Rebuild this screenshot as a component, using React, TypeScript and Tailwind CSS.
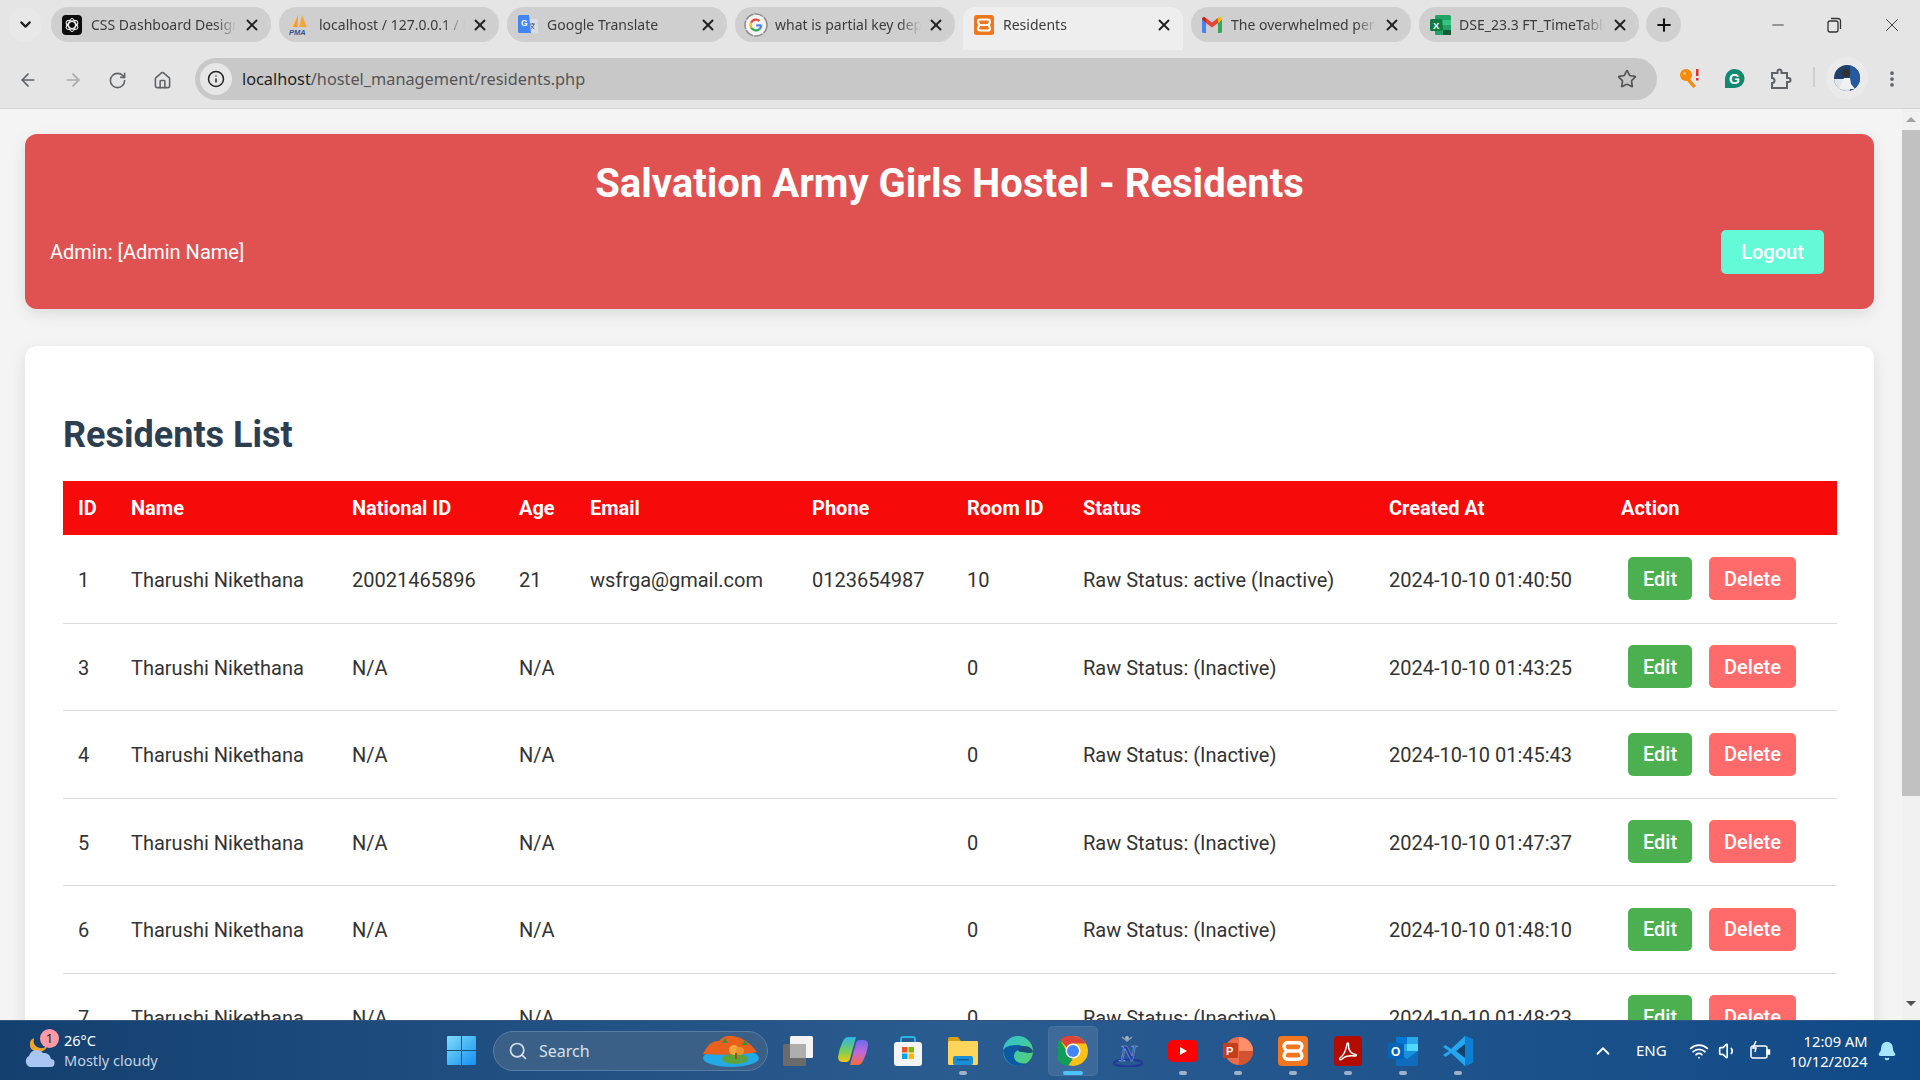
import React from 'react';
import {
  ArrowLeft, ArrowRight, RotateCw, Home, Info, Star, X, Plus, ChevronDown, ChevronUp,
  Minus, MoreVertical, Search, Wifi, Bell, Volume1,
} from 'lucide-react';

const XamppIcon = ({ size = 20 }: { size?: number }) => (
  <svg width={size} height={size} viewBox="0 0 20 20">
    <rect width="20" height="20" rx="2.500" fill="#f0761f" />
    <path
      d="M6.500 4.500h7c1.500 0 2.500 1 2.500 2.300 0 1.500-1.800 3.200-1.800 3.200s1.800 1.700 1.800 3.200c0 1.300-1 2.300-2.500 2.300h-7C5 15.500 4 14.500 4 13.200 4 11.700 5.800 10 5.800 10S4 8.300 4 6.800C4 5.500 5 4.500 6.500 4.500zM5.800 10h8.400"
      fill="none"
      stroke="#fff"
      strokeWidth="2.200"
    />
  </svg>
);

const ChatIcon = () => (
  <svg width="20" height="20" viewBox="0 0 20 20">
    <rect width="20" height="20" rx="4" fill="#0d0d0d" />
    <g fill="none" stroke="#fff" strokeWidth="1">
      <ellipse cx="10" cy="10" rx="3.400" ry="6.500" />
      <ellipse cx="10" cy="10" rx="3.400" ry="6.500" transform="rotate(60 10 10)" />
      <ellipse cx="10" cy="10" rx="3.400" ry="6.500" transform="rotate(120 10 10)" />
    </g>
  </svg>
);

const PmaIcon = () => (
  <svg width="22" height="20" viewBox="0 0 22 20">
    <path d="M9 0 4 12h4.500z" fill="#f29b2c" />
    <path d="M13 0 10 12h8z" fill="#f5a53c" />
    <path d="M6 2 1 12h3z" fill="#f9c788" />
    <text x="0" y="19.500" fontSize="7.500" fontWeight="700" fontStyle="italic" fill="#34508f" fontFamily="Liberation Sans, sans-serif">PMA</text>
  </svg>
);

const TranslateIcon = () => (
  <svg width="20" height="20" viewBox="0 0 20 20">
    <rect x="8" y="4" width="12" height="14" rx="1.500" fill="#d8dee8" />
    <path d="M12 9h5M14.500 8v1M16 9q-1 3.500-3.500 5M13 10.500q1.500 2.500 3.500 3.500" stroke="#5f6368" strokeWidth="1" fill="none" />
    <path d="M1.500 0H11l2 18-1 0H1.500A1.500 1.500 0 0 1 0 16.500v-15A1.500 1.500 0 0 1 1.500 0z" fill="#4285f4" />
    <text x="3" y="11" fontSize="8.500" fontWeight="700" fill="#fff" fontFamily="Liberation Sans, sans-serif">G</text>
  </svg>
);

const GoogleIcon = () => (
  <svg width="24" height="24" viewBox="0 0 24 24">
    <circle cx="12" cy="12" r="11" fill="#f4f4f4" stroke="#8a8a8a" strokeWidth="1.500" strokeDasharray="9 1" />
    <path d="M17.500 12.400h-5.300" stroke="#4285f4" strokeWidth="2.200" fill="none" />
    <path d="M17.300 12.400a5.400 5.400 0 0 1-2.100 3.900" stroke="#4285f4" strokeWidth="2.200" fill="none" />
    <path d="M15.200 16.300a5.500 5.500 0 0 1-8.100-1.900" stroke="#34a853" strokeWidth="2.200" fill="none" />
    <path d="M7.100 14.400a5.500 5.500 0 0 1 0-4.800" stroke="#fbbc05" strokeWidth="2.200" fill="none" />
    <path d="M7.100 9.600a5.500 5.500 0 0 1 8.400-1.800" stroke="#ea4335" strokeWidth="2.200" fill="none" />
  </svg>
);

const GmailIcon = () => (
  <svg width="20" height="16" viewBox="0 0 20 16">
    <path d="M0 2v12.500A1.500 1.500 0 0 0 1.500 16H4V6z" fill="#4285f4" />
    <path d="M16 6v10h2.500a1.500 1.500 0 0 0 1.500-1.500V2z" fill="#34a853" />
    <path d="M4 6 0 2.500V2a2 2 0 0 1 3.200-1.600L4 1z" fill="#c5221f" />
    <path d="M4 1v5l6 4.500L16 6V1l-6 4.500z" fill="#ea4335" />
    <path d="M16 1v5l4-3.500V2a2 2 0 0 0-3.200-1.600z" fill="#fbbc04" />
  </svg>
);

const ExcelIcon = () => (
  <svg width="21" height="20" viewBox="0 0 21 20">
    <rect x="5" width="16" height="20" rx="1.500" fill="#21a366" />
    <rect x="13" y="5" width="8" height="5" fill="#33c481" />
    <rect x="5" y="10" width="8" height="5" fill="#107c41" />
    <rect x="13" y="15" width="8" height="5" fill="#185c37" />
    <rect y="4" width="12" height="12" rx="1.500" fill="#107c41" />
    <text x="3" y="13.500" fontSize="9.500" fontWeight="700" fill="#fff" fontFamily="Liberation Sans, sans-serif">X</text>
  </svg>
);

const TABS = [
  { title: 'CSS Dashboard Design', icon: <ChatIcon /> },
  { title: 'localhost / 127.0.0.1 / hostel', icon: <PmaIcon /> },
  { title: 'Google Translate', icon: <TranslateIcon /> },
  { title: 'what is partial key dependency', icon: <GoogleIcon /> },
  { title: 'Residents', icon: <XamppIcon />, active: true },
  { title: 'The overwhelmed person', icon: <GmailIcon /> },
  { title: 'DSE_23.3 FT_TimeTable', icon: <ExcelIcon /> },
];

const RESIDENTS = [
  { id: 1, nat: '20021465896', age: '21', email: 'wsfrga@gmail.com', phone: '0123654987', room: '10', status: 'Raw Status: active (Inactive)', at: '2024-10-10 01:40:50' },
  { id: 3, nat: 'N/A', age: 'N/A', email: '', phone: '', room: '0', status: 'Raw Status: (Inactive)', at: '2024-10-10 01:43:25' },
  { id: 4, nat: 'N/A', age: 'N/A', email: '', phone: '', room: '0', status: 'Raw Status: (Inactive)', at: '2024-10-10 01:45:43' },
  { id: 5, nat: 'N/A', age: 'N/A', email: '', phone: '', room: '0', status: 'Raw Status: (Inactive)', at: '2024-10-10 01:47:37' },
  { id: 6, nat: 'N/A', age: 'N/A', email: '', phone: '', room: '0', status: 'Raw Status: (Inactive)', at: '2024-10-10 01:48:10' },
  { id: 7, nat: 'N/A', age: 'N/A', email: '', phone: '', room: '0', status: 'Raw Status: (Inactive)', at: '2024-10-10 01:48:23' },
];

const HEADINGS = [
  ['ID', 'w-[53px]'], ['Name', 'w-[221px]'], ['National ID', 'w-[167px]'], ['Age', 'w-[71px]'], ['Email', 'w-[222px]'],
  ['Phone', 'w-[155px]'], ['Room ID', 'w-[116px]'], ['Status', 'w-[306px]'], ['Created At', 'w-[232px]'], ['Action', 'w-[231px]'],
];

function BrowserChrome() {
  return (
    <div className="h-[109px] shrink-0 bg-[#e5e5e5] border-b border-[#d4d4d4] font-['Noto_Sans',sans-serif] text-[#3c3c3c]">
      <div className="h-[50px] flex items-start pt-[7px] pl-[9px]">
        <div className="w-[32px] h-[35px] flex items-center justify-center rounded-full bg-[#e8e8e8]">
          <ChevronDown size={17} strokeWidth={3} className="text-[#1f1f1f]" />
        </div>
        <div className="ml-[10px] flex gap-[8px]">
          {TABS.map(tab => (
            <div
              key={tab.title}
              className={`w-[220px] flex items-center pr-[10px] ${tab.active ? 'h-[43px] pb-[8px] bg-[#eeeeee] rounded-t-[12px]' : 'h-[35px] bg-[#cfcfcf] rounded-[17px]'}`}
            >
              <span className="w-[24px] ml-[9px] flex justify-center shrink-0">{tab.icon}</span>
              <span className="ml-[7px] flex-1 min-w-0 overflow-hidden whitespace-nowrap text-[14px] leading-[35px] [mask-image:linear-gradient(to_right,black_85%,transparent)]">{tab.title}</span>
              <X size={18} strokeWidth={2.500} className="ml-[6px] shrink-0 text-[#222]" />
            </div>
          ))}
        </div>
        <div className="ml-[7px] w-[35px] h-[35px] rounded-full bg-[#d0d0d0] flex items-center justify-center">
          <Plus size={20} strokeWidth={2.500} className="text-[#111]" />
        </div>
        <div className="ml-[88px] h-[35px] flex items-center gap-[37px] text-[#333]">
          <Minus size={18} strokeWidth={1.200} />
          <svg width="18" height="18" viewBox="0 0 18 18" fill="none" stroke="currentColor" strokeWidth="1.300" className="ml-[1px]">
            <rect x="3" y="5" width="10" height="11" rx="2" />
            <path d="M6 2.500h7a2.500 2.500 0 0 1 2.500 2.500v8" />
          </svg>
          <X size={22} strokeWidth={1} className="ml-[1px]" />
        </div>
      </div>
      <div className="h-[58px] flex items-start pt-[8px]">
        <div className="w-[195px] h-[42px] flex items-center text-[#5f6368] pl-[18px] pt-[2px] gap-[25px]">
          <ArrowLeft size={20} />
          <ArrowRight size={20} className="text-[#a8a8a8]" />
          <RotateCw size={19} />
          <Home size={19} className="ml-[1px]" />
        </div>
        <div className="w-[1462px] h-[42px] rounded-full bg-[#c8c8c8] flex items-center pl-[5px] pr-[20px]">
          <span className="w-[32px] h-[32px] rounded-full bg-[#e6e6e6] flex items-center justify-center">
            <Info size={18} className="text-[#222]" />
          </span>
          <span className="ml-[10px] pt-[1px] text-[16.300px] text-[#555] flex-1"><span className="text-[#1f1f1f]">localhost</span>/hostel_management/residents.php</span>
          <Star size={20} className="text-[#555]" />
        </div>
        <svg width="24" height="22" viewBox="0 0 24 22" className="ml-[21px] mt-[10px]">
          <circle cx="8" cy="7" r="6" fill="#f58a0b" />
          <path d="M11 10l7 8-2.500 2-2-2-1-1-4-5z" fill="#f58a0b" />
          <rect x="18" y="1" width="2.500" height="7" fill="#e0312b" />
          <rect x="18" y="10" width="2.500" height="2.500" fill="#e0312b" />
          <circle cx="6.500" cy="5.500" r="1.500" fill="#fbc27a" />
        </svg>
        <svg width="20" height="22" viewBox="0 0 20 22" className="ml-[23px] mt-[10px]">
          <path d="M10 1a9.500 9.500 0 0 1 0 19H0v-10A9.500 9.500 0 0 1 10 1z" fill="#0f8a70" />
          <text x="4" y="15.500" fontSize="14" fontWeight="700" fill="#fff" fontFamily="Liberation Sans, sans-serif">G</text>
        </svg>
        <svg width="22" height="22" viewBox="0 0 22 22" fill="none" stroke="#5f6368" strokeWidth="2" className="ml-[25px] mt-[10px]">
          <path d="M2 5h5.500V3.500a2 2 0 0 1 4 0V5H17v5h1.500a2 2 0 0 1 0 4H17v6H2v-5a2.500 2.500 0 0 0 0-5z" />
        </svg>
        <div className="ml-[21px] mt-[9px] w-[2px] h-[20px] bg-[#cfcfcf]" />
        <div className="ml-[11px] -mt-[1px] w-[42px] h-[42px] rounded-full bg-[#eaeaea] flex items-center justify-center">
          <svg width="26" height="26" viewBox="0 0 26 26">
            <clipPath id="avatar-clip"><circle cx="13" cy="13" r="13" /></clipPath>
            <g clipPath="url(#avatar-clip)">
              <rect width="26" height="26" fill="#1f3f6a" />
              <rect x="16" width="10" height="26" fill="#255a9f" />
              <rect y="14" width="16" height="12" fill="#dfe7ea" />
              <circle cx="12" cy="8" r="4" fill="#33302e" />
              <path d="M5 24l5-11h6l1 6 4 5z" fill="#f1f1f1" />
            </g>
          </svg>
        </div>
        <MoreVertical size={20} strokeWidth={2.500} className="ml-[14px] mt-[11px] text-[#5f6368]" />
      </div>
    </div>
  );
}

function ResidentsPage() {
  return (
    <div className="flex-1 min-h-0 flex bg-[#f4f4f4] overflow-hidden font-['Roboto',sans-serif]">
      <div className="flex-1 min-w-0 pl-[25px] pr-[28px] pt-[25px] overflow-hidden">
        <div className="h-[175px] rounded-[12px] bg-[#e05252] shadow-[0_5px_15px_rgba(0,0,0,0.1)] text-white px-[25px] pt-[26px]">
          <h1 className="text-[40px] leading-[47px] font-bold text-center">Salvation Army Girls Hostel - Residents</h1>
          <div className="mt-[23px] pr-[25px] flex items-center justify-between">
            <span className="text-[20px]">Admin: [Admin Name]</span>
            <button className="w-[103px] h-[44px] rounded-[5px] bg-[#64fad8] text-[20px] font-medium text-white">Logout</button>
          </div>
        </div>
        <div className="mt-[37px] rounded-[12px] bg-white shadow-[0_5px_15px_rgba(0,0,0,0.1)] px-[38px] pt-[67px] pb-[40px]">
          <h2 className="text-[36px] leading-[44px] font-bold text-[#2c3e50] mb-[24px]">Residents List</h2>
          <table className="w-full table-fixed border-collapse text-[20px] text-[#333]">
            <thead>
              <tr className="h-[54px] bg-[#f60a0a] text-white">
                {HEADINGS.map(([label, width]) => (
                  <th key={label} className={`${width} px-[15px] text-left font-bold`}>{label}</th>
                ))}
              </tr>
            </thead>
            <tbody>
              {RESIDENTS.map((r, i) => (
                <tr key={r.id} className={`${i === 0 ? 'h-[88px]' : 'h-[87.500px]'} border-b border-[#dddddd]`}>
                  <td className="px-[15px] pt-[2px]">{r.id}</td>
                  <td className="px-[15px] pt-[2px] whitespace-nowrap">Tharushi Nikethana</td>
                  <td className="px-[15px] pt-[2px]">{r.nat}</td>
                  <td className="px-[15px] pt-[2px]">{r.age}</td>
                  <td className="px-[15px] pt-[2px] whitespace-nowrap">{r.email}</td>
                  <td className="px-[15px] pt-[2px]">{r.phone}</td>
                  <td className="px-[15px] pt-[2px]">{r.room}</td>
                  <td className="px-[15px] pt-[2px] whitespace-nowrap">{r.status}</td>
                  <td className="px-[15px] pt-[2px] whitespace-nowrap">{r.at}</td>
                  <td className="pl-[22px]">
                    <div className="flex gap-[17px]">
                      <button className="w-[64px] h-[43px] rounded-[5px] bg-[#4caf50] text-white font-medium">Edit</button>
                      <button className="w-[87px] h-[43px] rounded-[5px] bg-[#ff6b6b] text-white font-medium">Delete</button>
                    </div>
                  </td>
                </tr>
              ))}
            </tbody>
          </table>
        </div>
      </div>
      <div className="w-[18px] shrink-0 bg-[#f1f1f1] flex flex-col items-center pt-[8px]">
        <span className="w-0 h-0 border-x-[5px] border-x-transparent border-b-[5px] border-b-[#a3a3a3]" />
        <div className="mt-[8px] w-full h-[666px] bg-[#c1c1c1]" />
        <span className="mt-[205px] w-0 h-0 border-x-[5px] border-x-transparent border-t-[5px] border-t-[#505050]" />
      </div>
    </div>
  );
}

const TASK_ICONS: { key: string; node: React.ReactNode; dot?: boolean; active?: boolean }[] = [
  {
    key: 'taskview',
    node: (
      <svg width="30" height="30" viewBox="0 0 30 30">
        <rect x="0" y="8" width="23" height="22" rx="1.500" fill="#6b6b6b" />
        <rect x="7" y="0" width="23" height="22" rx="1.500" fill="#f3f3f3" />
        <rect x="7" y="8" width="16" height="14" fill="#aeaeae" />
      </svg>
    ),
  },
  {
    key: 'copilot',
    node: (
      <svg width="30" height="30" viewBox="0 0 30 30">
        <defs>
          <linearGradient id="cop-a" x1="0" y1="0" x2="0" y2="1"><stop offset="0" stopColor="#2bb5e8" /><stop offset="0.6" stopColor="#7ed04f" /><stop offset="1" stopColor="#f5c518" /></linearGradient>
          <linearGradient id="cop-b" x1="0" y1="0" x2="0" y2="1"><stop offset="0" stopColor="#6a6cf0" /><stop offset="0.5" stopColor="#c468d8" /><stop offset="1" stopColor="#f56b3a" /></linearGradient>
        </defs>
        <path d="M10 1h8l-6 22q-1 3-4 3H5q-5 0-5-5 1-8 5-16 2-4 5-4z" fill="url(#cop-a)" />
        <path d="M20 29h-8l6-22q1-3 4-3h3q5 0 5 5-1 8-5 16-2 4-5 4z" fill="url(#cop-b)" />
      </svg>
    ),
  },
  {
    key: 'store',
    node: (
      <svg width="30" height="30" viewBox="0 0 30 30">
        <path d="M8 8V3q0-2 2-2h10q2 0 2 2v5" fill="none" stroke="#27b5e6" strokeWidth="2" />
        <rect x="1" y="6" width="28" height="24" rx="3" fill="#f4f4f4" />
        <rect x="9" y="11" width="5.500" height="5.500" fill="#f05022" />
        <rect x="15.500" y="11" width="5.500" height="5.500" fill="#7eb900" />
        <rect x="9" y="17.500" width="5.500" height="5.500" fill="#00a4ef" />
        <rect x="15.500" y="17.500" width="5.500" height="5.500" fill="#ffb900" />
      </svg>
    ),
  },
  {
    key: 'folder',
    dot: true,
    node: (
      <svg width="30" height="28" viewBox="0 0 30 28">
        <path d="M0 2q0-2 2-2h8l3 4h17v6H0z" fill="#d9a011" />
        <rect y="4" width="30" height="24" rx="1.500" fill="#fcd55a" />
        <rect x="5" y="19" width="20" height="9" rx="2" fill="#1a8fd6" />
        <rect x="9" y="22" width="12" height="1.500" fill="#0b5f9e" />
      </svg>
    ),
  },
  {
    key: 'edge',
    node: (
      <svg width="30" height="30" viewBox="0 0 30 30">
        <defs>
          <linearGradient id="edge-a" x1="0" y1="0" x2="1" y2="1"><stop offset="0" stopColor="#2fc1d8" /><stop offset="1" stopColor="#57d26b" /></linearGradient>
        </defs>
        <circle cx="15" cy="15" r="15" fill="url(#edge-a)" />
        <path d="M0 15C1 24 8 30 15 30c4 0 8-1 10-3-7 2-14-1-14-7 0-3 2-6 6-6 3 0 6 1 8 4-1-7-7-9-11-9C7 9 1 11 0 15z" fill="#0c59a4" />
        <path d="M30 16c0-3-4-6-9-6-3 0-6 2-6 4 0 1 1 2 4 2 4 0 8 2 11 0z" fill="#1d4f7c" />
      </svg>
    ),
  },
  {
    key: 'chrome',
    active: true,
    node: (
      <svg width="30" height="30" viewBox="0 0 30 30">
        <circle cx="15" cy="15" r="15" fill="#fbc116" />
        <path d="M15 0a15 15 0 0 1 13 7.500H15a7.500 7.500 0 0 0-6.500 3.750L2 3.800A15 15 0 0 1 15 0z" fill="#db4437" />
        <path d="M2 3.800l6.500 11.200a7.500 7.500 0 0 0 6.500 7.500L10 30A15 15 0 0 1 2 3.800z" fill="#109d58" />
        <circle cx="15" cy="15" r="7.500" fill="#fff" />
        <circle cx="15" cy="15" r="6" fill="#4285f4" />
      </svg>
    ),
  },
  {
    key: 'n',
    node: (
      <svg width="30" height="32" viewBox="0 0 30 32">
        <ellipse cx="15" cy="28" rx="14" ry="3.500" fill="none" stroke="#22379a" strokeWidth="2" />
        <circle cx="14" cy="3" r="2" fill="#a7b3c4" />
        <path d="M9 2l5 4 5-4" stroke="#8d9db1" strokeWidth="1.500" fill="none" />
        <text x="15" y="26" textAnchor="middle" fontSize="24" fontWeight="700" fontStyle="italic" fill="#1f3fa8" stroke="#9db2dc" strokeWidth="0.500" fontFamily="Liberation Serif, serif">N</text>
      </svg>
    ),
  },
  {
    key: 'youtube',
    dot: true,
    node: (
      <svg width="30" height="22" viewBox="0 0 30 22">
        <rect width="30" height="22" rx="5" fill="#f00" />
        <path d="M12 7l7 4-7 4z" fill="#fff" />
      </svg>
    ),
  },
  {
    key: 'powerpoint',
    dot: true,
    node: (
      <svg width="30" height="30" viewBox="0 0 30 30">
        <circle cx="16" cy="15" r="14" fill="#ed6c47" />
        <path d="M16 1a14 14 0 0 1 14 14H16z" fill="#ff8f6b" />
        <path d="M16 15h14a14 14 0 0 1-14 14z" fill="#d35230" />
        <rect y="7" width="15" height="15" rx="1.500" fill="#c43e1c" />
        <text x="3" y="19" fontSize="11" fontWeight="700" fill="#fff" fontFamily="Liberation Sans, sans-serif">P</text>
      </svg>
    ),
  },
  { key: 'xampp', dot: true, node: <XamppIcon size={30} /> },
  {
    key: 'acrobat',
    dot: true,
    node: (
      <svg width="28" height="30" viewBox="0 0 28 30">
        <rect width="28" height="30" rx="4" fill="#b30b00" />
        <path d="M6 22c3-2 6-8 7-14 .5-2 2-1 1.500 1-.5 5 3 9 7 9.500 1.500.2 1 1.500-.5 1.500-5-.5-10 0-13 3-1.500 1.500-3 .5-2-1z" fill="none" stroke="#fff" strokeWidth="1.500" />
      </svg>
    ),
  },
  {
    key: 'outlook',
    dot: true,
    node: (
      <svg width="30" height="30" viewBox="0 0 30 30">
        <rect x="8" y="1" width="22" height="14" fill="#28a8ea" />
        <rect x="8" y="1" width="11" height="7" fill="#0078d4" />
        <rect x="19" y="8" width="11" height="7" fill="#50d9ff" />
        <path d="M8 15h22v13a2 2 0 0 1-2 2H10a2 2 0 0 1-2-2z" fill="#1490df" />
        <path d="M8 15l11 8 11-8v15H8z" fill="#0f6cbd" />
        <rect y="7" width="16" height="16" rx="1.500" fill="#0364b8" />
        <text x="3" y="19.500" fontSize="12" fontWeight="700" fill="#fff" fontFamily="Liberation Sans, sans-serif">O</text>
      </svg>
    ),
  },
  {
    key: 'vscode',
    dot: true,
    node: (
      <svg width="30" height="30" viewBox="0 0 30 30">
        <path d="M22 0l8 3.500v23L22 30 8 17l-5.500 4L0 19l6-4-6-4 2.500-2L8 13z" fill="#22a7f0" />
        <path d="M22 8v14l-9-7z" fill="#12416b" />
        <path d="M22 0l8 3.500v23L22 30z" fill="#0e7fd0" />
      </svg>
    ),
  },
];

function Taskbar() {
  return (
    <div className="h-[60px] shrink-0 flex items-center border-t border-[#33567f] bg-gradient-to-r from-[#13406f] via-[#2b5c90] to-[#0f4a87] text-white font-['Noto_Sans',sans-serif]">
      <div className="relative w-[447px] shrink-0 pl-[24px] flex items-center gap-[8px]">
        <svg width="32" height="36" viewBox="0 0 32 36">
          <path d="M10 5q-2 8 6 10 5 1 8-4-2 8-10 8-9-1-8-9 0-3 4-5z" fill="#f2a52c" />
          <path d="M6 34a6 6 0 0 1-1-11 8 8 0 0 1 14-3 7 7 0 0 1 8 6 4 4 0 0 1-1 8z" fill="#a9c6f2" />
        </svg>
        <span className="absolute left-[40px] -top-[3px] w-[19px] h-[19px] rounded-full bg-[#fd9aa6] text-[#222] text-[13px] leading-[19px] text-center">1</span>
        <div className="leading-[20px] -mt-[2px]">
          <div className="text-[14.500px]">26°C</div>
          <div className="text-[14.500px] text-[#c4d2e2]">Mostly cloudy</div>
        </div>
      </div>
      <svg width="29" height="29" viewBox="0 0 29 29" className="shrink-0">
        <defs>
          <linearGradient id="win-a" x1="0" y1="0" x2="1" y2="1"><stop offset="0" stopColor="#7fdcfb" /><stop offset="1" stopColor="#1390ef" /></linearGradient>
        </defs>
        <path d="M1 0h13v14H0V1a1 1 0 0 1 1-1zM15 0h13a1 1 0 0 1 1 1v13H15zM0 15h14v14H1a1 1 0 0 1-1-1zM15 15h14v13a1 1 0 0 1-1 1H15z" fill="url(#win-a)" />
      </svg>
      <div className="ml-[17px] w-[275px] h-[40px] shrink-0 rounded-full bg-[#3a6088] border border-[#587da3] flex items-center pl-[14px] pr-[7px] text-[#d7e0ea]">
        <Search size={20} strokeWidth={2} />
        <span className="ml-[11px] text-[16px] flex-1">Search</span>
        <svg width="58" height="32" viewBox="0 0 58 32">
          <ellipse cx="29" cy="23" rx="28" ry="9" fill="#23a9e8" />
          <path d="M1 19q6-14 16-13 5-6 14-5 14 2 24 16-20 4-54 2z" fill="#e8601c" />
          <path d="M20 8l3-5 3 5zM40 10l3-5 3 5z" fill="#3e8f44" />
          <ellipse cx="33" cy="24" rx="13" ry="5" fill="#5ea33a" />
          <circle cx="32" cy="15" r="5" fill="#f4a63a" />
          <circle cx="38" cy="16" r="4" fill="#e9912c" />
          <rect x="33" y="18" width="2" height="6" fill="#8a5a24" />
        </svg>
      </div>
      <div className="ml-[15px] flex items-center gap-[25px]">
        {TASK_ICONS.map(item => (
          <div key={item.key} className="relative w-[30px] h-[30px] flex items-center justify-center">
            {item.active && (
              <>
                <span className="absolute -inset-x-[10px] -top-[10px] -bottom-[10px] rounded-[5px] bg-white/10 border border-white/5" />
                <span className="absolute left-[5px] -bottom-[9px] w-[20px] h-[4px] rounded-full bg-[#4cc2ff]" />
              </>
            )}
            {item.dot && <span className="absolute left-[11px] -bottom-[9px] w-[8px] h-[4px] rounded-full bg-[#9fb2c8]" />}
            <span className="relative flex">{item.node}</span>
          </div>
        ))}
      </div>
      <ChevronUp size={22} strokeWidth={2} className="ml-[119px] shrink-0" />
      <span className="ml-[22px] text-[15px]">ENG</span>
      <Wifi size={20} strokeWidth={2.200} className="ml-[22px] shrink-0" />
      <Volume1 size={20} className="ml-[9px] shrink-0" />
      <svg width="22" height="20" viewBox="0 0 22 20" fill="none" stroke="#fff" strokeWidth="1.500" className="ml-[11px] shrink-0">
        <rect x="2" y="5" width="16" height="12" rx="2" />
        <rect x="18" y="9" width="2.500" height="4" fill="#fff" />
        <path d="M7 0L4 7h3l-1 4" />
      </svg>
      <div className="ml-[5px] w-[92px] shrink-0 text-right text-[14.700px] leading-[20px]">
        <div>12:09 AM</div>
        <div>10/12/2024</div>
      </div>
      <Bell size={20} fill="#a8e6ff" className="ml-[9px] shrink-0 text-[#a8e6ff]" />
    </div>
  );
}

export default function App() {
  return (
    <div className="w-screen h-screen flex flex-col overflow-hidden">
      <BrowserChrome />
      <ResidentsPage />
      <Taskbar />
    </div>
  );
}
